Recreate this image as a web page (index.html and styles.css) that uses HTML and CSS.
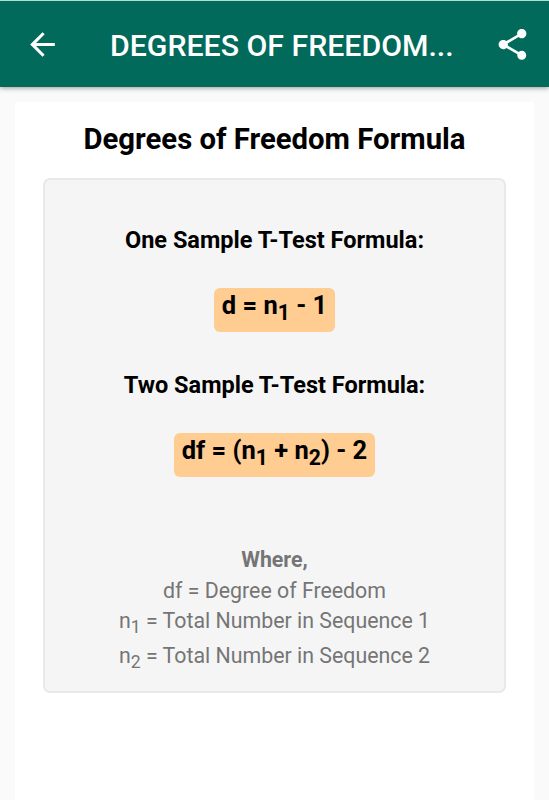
FILE: index.html
```html
<!DOCTYPE html>
<html lang="en">
<head>
    <meta charset="UTF-8">
    <meta name="viewport" content="width=device-width, initial-scale=1.0">
    <title>Degrees of Freedom Formula</title>

    <link rel="stylesheet" href="styles.css">
</head>

<body>

    <header class="header">
        <button class="header__button" aria-label="Back">
            <svg width="37" height="37" viewBox="0 0 24 24"><path d="M20 11H7.83l5.59-5.59L12 4l-8 8 8 8 1.41-1.41L7.83 13H20v-2z"/></svg>
        </button>
        <h1 class="header__title">DEGREES OF FREEDOM...</h1>
        <button class="header__button" aria-label="Share">
            <svg width="37" height="37" viewBox="0 0 24 24"><path d="M18 16.08c-.76 0-1.44.3-1.96.77L8.91 12.7c.05-.23.09-.46.09-.7s-.04-.47-.09-.7l7.05-4.11c.54.5 1.25.81 2.04.81 1.66 0 3-1.34 3-3s-1.34-3-3-3-3 1.34-3 3c0 .24.04.47.09.7L8.04 9.81C7.5 9.31 6.79 9 6 9c-1.66 0-3 1.34-3 3s1.34 3 3 3c.79 0 1.5-.31 2.04-.81l7.12 4.16c-.05.21-.08.43-.08.65 0 1.61 1.31 2.92 2.92 2.92s2.92-1.31 2.92-2.92-1.31-2.92-2.92-2.92z"/></svg>
        </button>
    </header>

    <main class="page">
        <h2 class="page__title">Degrees of Freedom Formula</h2>

        <section class="card">
            <h3 class="card__title">One Sample T-Test Formula:</h3>
            <div class="formula"><span class="formula__text">d = n<sub>1</sub> - 1</span></div>

            <h3 class="card__title">Two Sample T-Test Formula:</h3>
            <div class="formula"><span class="formula__text">df = (n<sub>1</sub> + n<sub>2</sub>) - 2</span></div>

            <div class="legend">
                <b class="legend__title">Where,</b>
                <p class="legend__df">df = Degree of Freedom</p>
                <p class="legend__n1">n<sub>1</sub> = Total Number in Sequence 1</p>
                <p class="legend__n2">n<sub>2</sub> = Total Number in Sequence 2</p>
            </div>
        </section>
    </main>

</body>

</html>
```

FILE: styles.css
```css
* {
    box-sizing: border-box;
}

body {
    margin: 0;
    height: 100vh;
    display: flex;
    flex-direction: column;
    overflow: hidden;
    background: #fafafa;
    color: #000;
    font-family: Roboto, "Liberation Sans", sans-serif;
}

h1, h2, h3, p {
    margin: 0;
    white-space: nowrap;
}

/* header */
.header {
    flex: none;
    display: flex;
    align-items: center;
    height: 87px;
    padding: 1px 18px 0 24px;
    background: #016a5a;
    border-top: 1px solid #b5d8d2;
    box-shadow: 0 1px 5px rgba(0, 0, 0, 0.4);
}

.header__button {
    display: flex;
    padding: 0;
    border: 0;
    background: none;
}

.header__button svg {
    fill: #fff;
}

.header__title {
    flex: 1;
    padding: 3px 0 0 49px;
    color: #fff;
    font-size: 30.25px;
    font-weight: 500;
    line-height: 36px;
}

/* page */
.page {
    flex: 1;
    margin: 15px 15px 0;
    padding: 17px 28px 0;
    background: #fff;
    text-align: center;
}

.page__title {
    font-size: 29.3px;
    font-weight: 700;
    line-height: 40px;
}

.card {
    height: 515px;
    margin-top: 19px;
    padding-top: 45px;
    background: #f5f5f5;
    border: 2px solid #e9e9e9;
    border-radius: 7px;
}

.card__title {
    font-size: 23.5px;
    font-weight: 700;
    line-height: 30px;
}

/* formulas */
.formula {
    display: flex;
    justify-content: center;
    padding: 33px 0 38px;
}

.formula__text {
    height: 44px;
    padding: 0 8px;
    background: #ffcc92;
    border-radius: 6px;
    font-size: 25.5px;
    font-weight: 700;
    line-height: 35px;
    white-space: nowrap;
}

sub {
    font-size: 0.83em;
    line-height: 0;
}

/* legend */
.legend {
    padding-top: 30px;
    color: #757575;
    font-size: 21.35px;
    line-height: 30.5px;
}

.legend__n2 {
    padding-top: 4px;
}
```
